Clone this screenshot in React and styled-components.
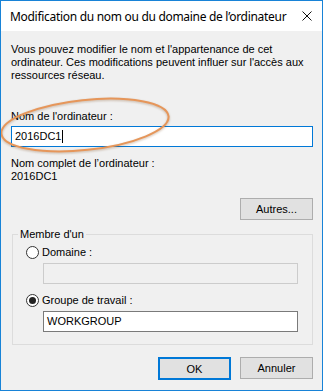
import React from 'react'
import styled, { createGlobalStyle } from 'styled-components'

const GlobalStyle = createGlobalStyle`
  html, body {
    margin: 0;
    padding: 0;
    background: #fff;
  }
  body {
    font-family: "Liberation Sans", Arial, sans-serif;
    font-size: 11px;
    color: #000;
  }
`

function App() {
  return (
    <>
      <GlobalStyle />
      <Window>
        <TitleBar>
          <Title>Modification du nom ou du domaine de l’ordinateur</Title>
          <Close aria-label="Fermer">
            <svg width="10" height="10" viewBox="0 0 10 10">
              <path d="M0.5 0.5 L9.5 9.5 M9.5 0.5 L0.5 9.5" stroke="#111" strokeWidth="1" fill="none" />
            </svg>
          </Close>
        </TitleBar>
        <Body>
          <Text>
            Vous pouvez modifier le nom et l'appartenance de cet<br />
            ordinateur. Ces modifications peuvent influer sur l'accès aux<br />
            ressources réseau.
          </Text>
          <Text $mt={28}>Nom de l'ordinateur :</Text>
          <TextBox $mt={3} $focused>
            2016DC1<Caret />
          </TextBox>
          <Text $mt={10}>Nom complet de l’ordinateur :</Text>
          <Text>2016DC1</Text>
          <RightRow $mt={15}>
            <Button>Autres...</Button>
          </RightRow>
          <Group>
            <Legend>Membre d'un</Legend>
            <RadioRow $mt={5}>
              <Radio />
              <span>Domaine :</span>
            </RadioRow>
            <TextBox $mt={4} $indent $disabled />
            <RadioRow $mt={10}>
              <Radio $checked />
              <span>Groupe de travail :</span>
            </RadioRow>
            <TextBox $mt={4} $indent>WORKGROUP</TextBox>
          </Group>
          <RightRow $mt={12}>
            <Button $default>OK</Button>
            <Button>Annuler</Button>
          </RightRow>
        </Body>
        <Highlight width="180" height="160" viewBox="0 0 180 160">
          <ellipse
            cx="84"
            cy="124"
            rx="84"
            ry="25"
            transform="rotate(-6 84 124)"
            fill="none"
            stroke="#e6965a"
            strokeWidth="2"
          />
        </Highlight>
      </Window>
    </>
  )
}

export default App

const Window = styled.div`
  width: 323px;
  height: 391px;
  box-sizing: border-box;
  border: 1px solid #1883d7;
  display: flex;
  flex-direction: column;
  position: relative;
  overflow: hidden;
  background: #f0f0f0;
`

const TitleBar = styled.div`
  height: 30px;
  flex-shrink: 0;
  background: #fff;
  display: flex;
  align-items: center;
  justify-content: space-between;
  padding: 0 10px 0 9px;
`

const Title = styled.span`
  font-family: "Segoe UI", "Noto Sans", sans-serif;
  font-size: 12px;
  letter-spacing: -0.3px;
  color: #000;
  white-space: nowrap;
`

const Close = styled.button`
  width: 10px;
  height: 10px;
  flex-shrink: 0;
  padding: 0;
  border: none;
  background: none;
  display: flex;
`

const Body = styled.div`
  flex: 1;
  display: flex;
  flex-direction: column;
  padding: 12px 9px 0 10px;
`

const Text = styled.p`
  margin: ${p => p.$mt || 0}px 0 0 0;
  line-height: 13px;
`

const TextBox = styled.div`
  margin-top: ${p => p.$mt || 0}px;
  margin-left: ${p => (p.$indent ? '17px' : '0')};
  height: 21px;
  box-sizing: border-box;
  padding: 0 3px;
  display: flex;
  align-items: center;
  background: ${p => (p.$disabled ? '#f0f0f0' : '#fff')};
  border: 1px solid ${p => (p.$focused ? '#0078d7' : p.$disabled ? '#cccccc' : '#7a7a7a')};
  line-height: 13px;
`

const Caret = styled.span`
  display: inline-block;
  width: 1px;
  height: 13px;
  background: #000;
  margin-left: 1px;
`

const RightRow = styled.div`
  margin-top: ${p => p.$mt || 0}px;
  display: flex;
  justify-content: flex-end;
  gap: 9px;
`

const Button = styled.button`
  width: 73px;
  height: ${p => (p.$default ? '23px' : '22px')};
  box-sizing: border-box;
  padding: 0;
  font-family: "Liberation Sans", Arial, sans-serif;
  font-size: 11px;
  font-weight: 400;
  color: #000;
  background: #e1e1e1;
  border: 1px solid ${p => (p.$default ? '#0078d7' : '#adadad')};
  box-shadow: ${p => (p.$default ? 'inset 0 0 0 1px #0078d7' : 'none')};
`

const Group = styled.fieldset`
  margin: 8px 0 0 1px;
  padding: 0 14px 12px 13px;
  border: 1px solid #dcdcdc;
  min-inline-size: 0;
  display: flex;
  flex-direction: column;
`

const Legend = styled.legend`
  margin-left: -8px;
  padding: 0 2px;
  line-height: 13px;
`

const RadioRow = styled.label`
  margin-top: ${p => p.$mt || 0}px;
  display: flex;
  align-items: center;
  gap: 3px;
  line-height: 13px;
`

const Radio = styled.span`
  width: 13px;
  height: 13px;
  box-sizing: border-box;
  border-radius: 50%;
  border: 1px solid #333;
  background: #fff;
  display: flex;
  align-items: center;
  justify-content: center;
  &::after {
    content: '';
    width: 7px;
    height: 7px;
    border-radius: 50%;
    background: #222;
    display: ${p => (p.$checked ? 'block' : 'none')};
  }
`

const Highlight = styled.svg`
  position: absolute;
  left: 0;
  top: 0;
  pointer-events: none;
  filter: drop-shadow(0 1px 1px rgba(120, 70, 20, 0.35));
`
